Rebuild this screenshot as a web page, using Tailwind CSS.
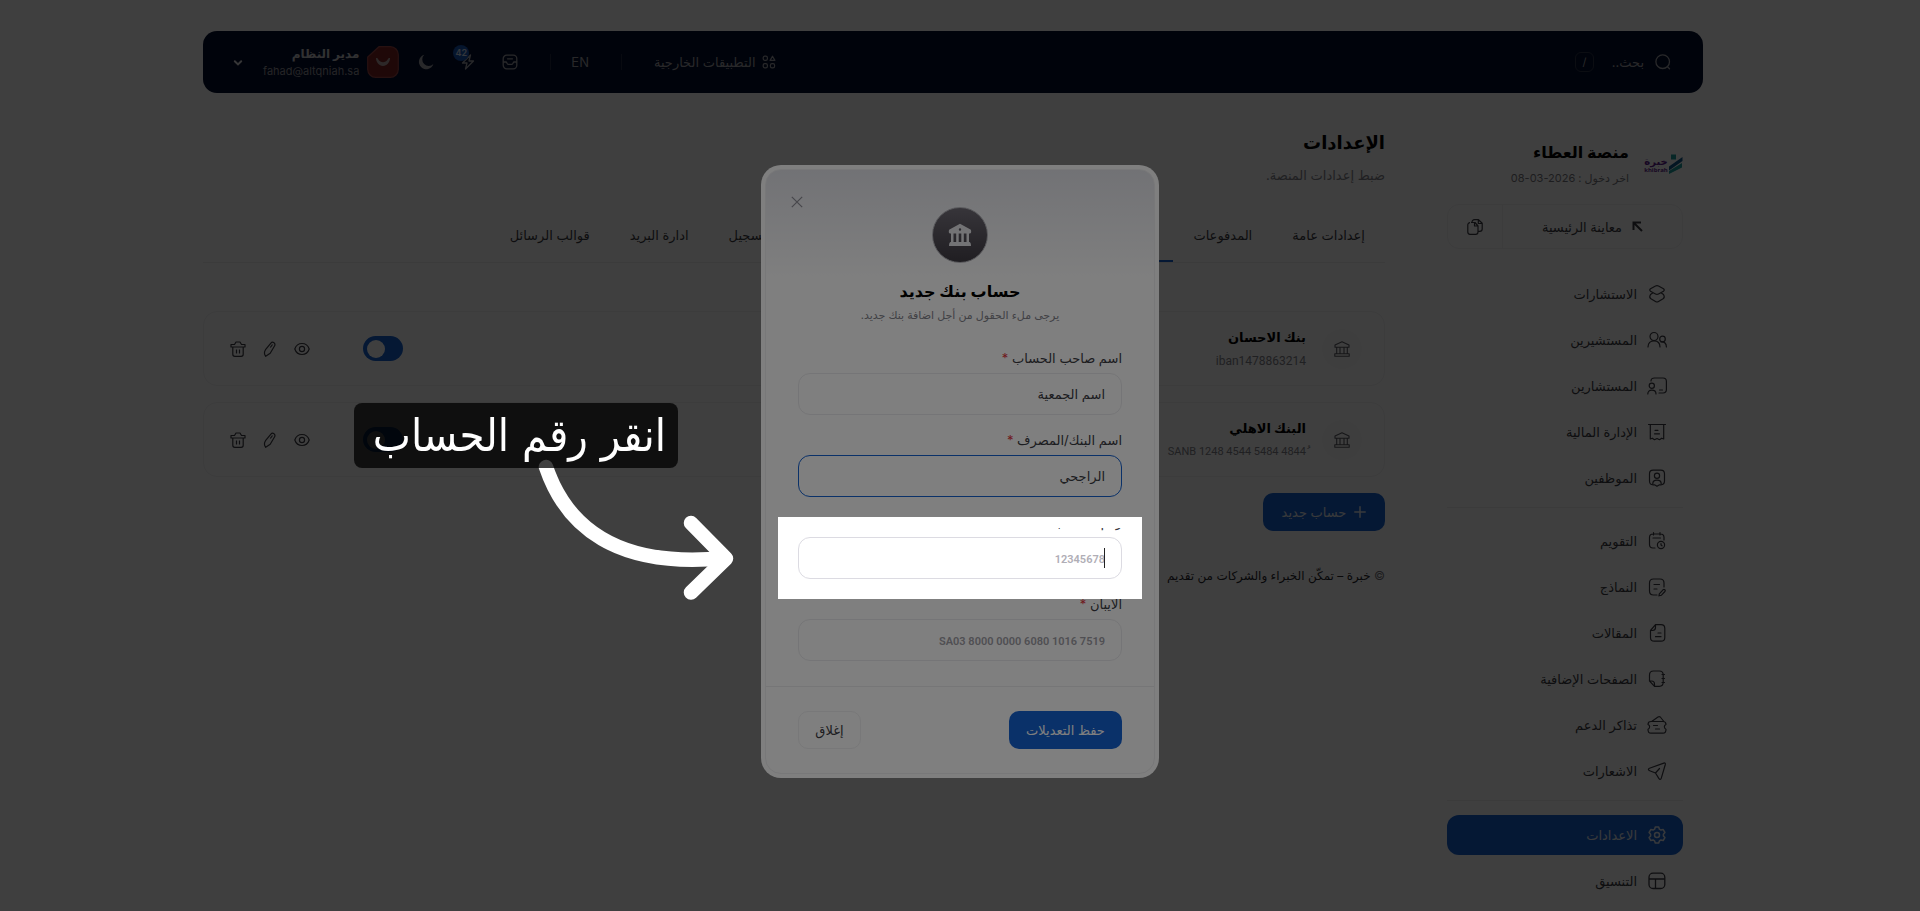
<!DOCTYPE html>
<html lang="ar" dir="rtl">

<head>
  <meta charset="UTF-8">
  <meta name="viewport" content="width=device-width, initial-scale=1.0">
  <title>الإعدادات - منصة العطاء</title>
  <script src="https://cdn.jsdelivr.net/npm/@tailwindcss/browser@4"></script>
</head>

<body class="bg-white h-screen overflow-hidden pr-[14px] pt-[31px] text-[13px] leading-5 text-[#3a3a42] font-[Inter,'DejaVu_Sans',sans-serif]">

  <!-- الشريط العلوي -->
  <header class="max-w-[1500px] h-[62px] mx-auto pr-8 pl-[30px] rounded-[14px] bg-[#020c2c] flex items-center justify-between text-[#a2a3aa]">
    <div class="flex items-center gap-1">
      <label class="flex items-center gap-[11px]">
        <svg class="size-4" viewBox="0 0 16 16" fill="none" stroke="currentColor" stroke-width="1.3"><circle cx="7.7" cy="7.7" r="6.8" /><path d="M12.5 12.8l2 2" stroke-linecap="round" /></svg>
        <input type="search" placeholder="بحث.." aria-label="بحث" class="w-[46px] text-[13px] outline-none placeholder:text-[#a2a3aa]">
      </label>
      <kbd class="w-[19px] h-5 rounded-md border border-[#2c3549] text-[11px] leading-[18px] text-center font-[Inter]">/</kbd>
    </div>

    <div class="flex items-center">
      <a href="#" class="flex items-center gap-[6px]">
        <svg class="size-[14px]" viewBox="0 0 14 14" fill="none" stroke="currentColor" stroke-width="1.2"><path d="M10.5 1.2l2.4 4.2H8.100z" stroke-linejoin="round" /><rect x="1.200" y="1.200" width="4.200" height="4.200" rx="1.600" /><rect x="1.200" y="8.600" width="4.200" height="4.200" rx="1.600" /><rect x="8.400" y="8.600" width="4.200" height="4.200" rx="1.600" /></svg>
        التطبيقات الخارجية
      </a>
      <span class="w-px h-4 mr-8 bg-[#222b42]"></span>
      <button class="mr-8 text-[13px]">EN</button>
      <span class="w-px h-4 mr-5 ml-8 bg-[#222b42]"></span>
      <button aria-label="البريد">
        <svg class="size-4" viewBox="0 0 16 16" fill="none" stroke="currentColor" stroke-width="1.3" stroke-linecap="round"><rect x="1.200" y="1.200" width="13.600" height="13.600" rx="3.500" /><path d="M5.500 4.800h5M1.500 8H4c.8 0 1 2.300 2 2.300h4c1 0 1.200-2.300 2-2.300h2.500" /></svg>
      </button>
      <button aria-label="الإشعارات" class="relative mr-[26px]">
        <svg class="size-4" viewBox="0 0 16 16" fill="none" stroke="currentColor" stroke-width="1.3" stroke-linejoin="round"><path d="M10.500 1L2.500 9H7l-1.500 6L13.500 7H9z" /></svg>
        <span class="absolute -top-[9px] -left-[7px] w-4 h-4 rounded-full bg-[#1455b5] text-white/80 text-[9px] leading-4 font-semibold text-center">42</span>
      </button>
      <button aria-label="الوضع الليلي" class="mr-[26px]">
        <svg class="size-4" viewBox="0 0 16 16" fill="currentColor"><path d="M6.200.8A7.400 7.400 0 1 0 15.400 10.100 6.300 6.300 0 0 1 6.200.8z" /></svg>
      </button>
      <svg class="size-8 mr-[19px]" viewBox="0 0 32 32"><path d="M12 .7h11a8 8 0 0 1 8.300 8.300v14a8 8 0 0 1-8.300 8.300H9A8 8 0 0 1 .7 23V11z" fill="#7c2222" stroke="#9c4545" stroke-width="1.200" /><path d="M9 12c1.500 0 1.500 0 2.500 1.700a5.200 5.200 0 0 0 9 0C21.500 12 21.500 12 23 12c0 4-3 8-7 8s-7-4-7-8z" fill="#b5a3a3" /></svg>
      <div class="mr-2">
        <p class="text-xs leading-[18px] font-bold text-[#c6c6cb]">مدير النظام</p>
        <p class="text-[11px] leading-4 text-[#94959c]" dir="ltr">fahad@altqniah.sa</p>
      </div>
      <svg class="w-[10px] h-[10px] mr-5 mt-px" viewBox="0 0 10 10" fill="none" stroke="#d8d8dc" stroke-width="2" stroke-linecap="round"><path d="M1.800 3.200L5 6.400l3.200-3.200" /></svg>
    </div>
  </header>

  <div class="max-w-[1500px] mx-auto pr-5 flex gap-[62px]">
    <!-- القائمة الجانبية -->
    <aside class="w-[236px] shrink-0 pt-[47px]">
      <div class="flex items-center gap-4">
        <svg class="w-[38px] h-[22px] overflow-visible" viewBox="0 0 38 22">
          <text x="11" y="12" text-anchor="middle" font-size="10" font-weight="bold" fill="#5d1a8c" class="font-['DejaVu_Sans']">خبرة</text>
          <text x="11" y="19" text-anchor="middle" font-size="6" font-weight="bold" fill="#5d1a8c" class="font-['Open_Sans']">khibrah</text>
          <path d="M26 1.500h5v5h-5z" fill="#1e9c9c" /><path d="M24 13.500L37.500 4v4L24 17.500z" fill="#12588c" /><path d="M24 18L37 10v4.500L24 21z" fill="#1e9c9c" />
        </svg>
        <div>
          <h2 class="text-base leading-6 font-bold text-black">منصة العطاء</h2>
          <p class="mt-1 text-[11px] text-[#77777f]">اخر دخول : <span dir="ltr">08-03-2026</span></p>
        </div>
      </div>
      <div class="mt-4 h-[45px] flex rounded-xl border border-[#f0f0f2]">
        <a href="#" class="flex-1 flex items-center justify-center gap-[10px]">
          <svg class="size-[11px]" viewBox="0 0 11 11" fill="none" stroke="currentColor" stroke-width="2"><path d="M1.500 9V1.500H9M1.500 1.500l8.500 8.500" /></svg>
          معاينة الرئيسية
        </a>
        <button aria-label="نسخ" class="w-[55px] border-r border-[#f0f0f2] flex items-center justify-center">
          <svg class="size-4" viewBox="0 0 16 16" fill="none" stroke="currentColor" stroke-width="1.200" stroke-linejoin="round"><path d="M4 3.500h4L11 7v6a2.300 2.300 0 0 1-2.300 2.300H3A2.300 2.300 0 0 1 .8 13V6A2.300 2.300 0 0 1 3 3.600M7.500 3.700V7H11M5 3.300C5 1.500 6 .7 7.500.7h4L15.200 4.300V10c0 1.500-1 2.400-2.500 2.400H11.300M11.300.8V4.500H15" /></svg>
        </button>
      </div>

      <nav class="mt-[25px]">
        <ul class="flex flex-col gap-[6px] pb-[9px]">
          <li><a href="#" class="h-10 px-[16px] flex items-center gap-[10px]">
            <svg class="size-5" viewBox="0 0 20 20" fill="none" stroke="currentColor" stroke-width="1.200" stroke-linejoin="round"><path d="M8.500 2Q10 1.200 11.500 2L16.500 4.800Q18 6 16.500 7.200L11.500 10Q10 10.800 8.500 10L3.500 7.200Q2 6 3.500 4.800zM6 8.700L3.500 10.500Q2 13 3.500 14.500L8.500 17.500Q10 18.500 11.500 17.500L16.500 14.500Q18 13 16.500 10.500L14 8.700" /></svg>
            الاستشارات</a></li>
          <li><a href="#" class="h-10 px-[16px] flex items-center gap-[10px]">
            <svg class="size-5" viewBox="0 0 20 20" fill="none" stroke="currentColor" stroke-width="1.200" stroke-linecap="round"><circle cx="7" cy="6.500" r="4" /><path d="M1 17c0-4 2.500-6.200 6-6.200s6 2.200 6 6.200" /><circle cx="15.500" cy="9" r="2.800" /><path d="M14 12c3.500-.5 5.400 1.500 5.400 5" /></svg>
            المستشيرين</a></li>
          <li><a href="#" class="h-10 px-[16px] flex items-center gap-[10px]">
            <svg class="size-5" viewBox="0 0 20 20" fill="none" stroke="currentColor" stroke-width="1.200" stroke-linecap="round"><path d="M4 5c0-2 1.500-3 3.500-3H16c2.200 0 3.400 1.200 3.400 3.400v8.200c0 2.200-1.200 3.400-3.400 3.400h-4M12.500 14h3" /><circle cx="4.800" cy="9.800" r="2.600" /><path d="M.8 18c0-2.600 1.600-3.800 4-3.800S9 15.400 9 18" /></svg>
            المستشارين</a></li>
          <li><a href="#" class="h-10 px-[16px] flex items-center gap-[10px]">
            <svg class="size-5" viewBox="0 0 20 20" fill="none" stroke="currentColor" stroke-width="1.200" stroke-linecap="round" stroke-linejoin="round"><path d="M1.500 2.500h17M3.300 2.500V17l2-.8 2.200 1.500 2.500-1.200 2.500 1.200 2.200-1.500 2 .8V2.500M8 8.300h3M7.500 11.800h5" /></svg>
            الإدارة المالية</a></li>
          <li><a href="#" class="h-10 px-[16px] flex items-center gap-[10px]">
            <svg class="size-5" viewBox="0 0 20 20" fill="none" stroke="currentColor" stroke-width="1.200" stroke-linecap="round" stroke-linejoin="round"><path d="M7.500 16.800H6.200c-2.500 0-3.700-1.200-3.700-3.700V5.800c0-2.500 1.200-3.700 3.700-3.700h7.600c2.500 0 3.700 1.200 3.700 3.700v7.300c0 2.500-1.200 3.700-3.700 3.700h-1.300L10 18.300z" /><circle cx="10" cy="7.700" r="2.600" /><path d="M5.800 15.800c0-2.400 1.700-3.600 4.200-3.600s4.200 1.200 4.200 3.600" /></svg>
            الموظفين</a></li>
        </ul>
        <ul class="flex flex-col gap-[6px] pt-[13px] pb-[9px] border-t border-[#ececee]">
          <li><a href="#" class="h-10 px-[16px] flex items-center gap-[10px]">
            <svg class="size-5" viewBox="0 0 20 20" fill="none" stroke="currentColor" stroke-width="1.200" stroke-linecap="round"><path d="M8 17H6c-2.400 0-3.500-1.100-3.500-3.500v-7C2.500 4.100 3.600 3 6 3h7.500C16 3 17 4.100 17 6.500V9M6.500 1.500V4M13 1.500V4M6 7h7.500" /><circle cx="14" cy="14" r="3.600" /><path d="M14 12.500V14l1 .8" /></svg>
            التقويم</a></li>
          <li><a href="#" class="h-10 px-[16px] flex items-center gap-[10px]">
            <svg class="size-5" viewBox="0 0 20 20" fill="none" stroke="currentColor" stroke-width="1.200" stroke-linecap="round"><path d="M10 18H6.500c-2.700 0-4-1.300-4-4V6c0-2.700 1.300-4 4-4H13c2.700 0 4 1.300 4 4v4M7 7.500h5.500M7 12h3" /><path d="M12.300 16.800l3.700-4c1.300-1.200 3 .4 1.900 1.700l-3.600 3.800-2.300.5z" /></svg>
            النماذج</a></li>
          <li><a href="#" class="h-10 px-[16px] flex items-center gap-[10px]">
            <svg class="size-5" viewBox="0 0 20 20" fill="none" stroke="currentColor" stroke-width="1.200" stroke-linecap="round"><path d="M3.500 7.500L8.500 1.600H14c2.500 0 3.800 1.300 3.800 3.800v9c0 2.500-1.300 3.800-3.800 3.800H7.300c-2.500 0-3.800-1.300-3.800-3.800zM8.500 1.800V4.500c0 2-1 3-3 3H3.700M11 10h3M8.500 13.700H14" /></svg>
            المقالات</a></li>
          <li><a href="#" class="h-10 px-[16px] flex items-center gap-[10px]">
            <svg class="size-5" viewBox="0 0 20 20" fill="none" stroke="currentColor" stroke-width="1.200" stroke-linecap="round"><path d="M7.500 17.300L2.500 12V6c0-2.700 1.300-4 4-4h5.800c2.600 0 3.900 1.300 3.900 4v7.300c0 2.700-1.300 4-3.900 4zM7.500 17v-2c0-2-1-3-3-3h-2M15 5.500h2.500M15 9.500h2.500M15 13.500h2.500" /></svg>
            الصفحات الإضافية</a></li>
          <li><a href="#" class="h-10 px-[16px] flex items-center gap-[10px]">
            <svg class="size-5" viewBox="0 0 20 20" fill="none" stroke="currentColor" stroke-width="1.200" stroke-linecap="round" stroke-linejoin="round"><path d="M4 6.500h12c2 0 3 1 3 3-2.200.7-2.200 4 0 4.700 0 3-1 4-3 4H4c-2 0-3-1-3-4 2.200-.7 2.200-4 0-4.700 0-2 1-3 3-3zM5 6.300L11 2c1-.7 1.500-.7 2.300 0L16.500 6M6.500 10.500h4M8.500 14h4" /></svg>
            تذاكر الدعم</a></li>
          <li><a href="#" class="h-10 px-[16px] flex items-center gap-[10px]">
            <svg class="size-5" viewBox="0 0 20 20" fill="none" stroke="currentColor" stroke-width="1.200" stroke-linecap="round" stroke-linejoin="round"><path d="M2.500 7.300l14.300-5.200c1.200-.4 1.800.2 1.500 1.400l-4 13.600c-.5 1.700-1.600 1.700-2.500.3L8.500 12 2.700 9.700C1 9 1 7.900 2.500 7.300zM8.500 12l4-4.500" /></svg>
            الاشعارات</a></li>
        </ul>
        <ul class="flex flex-col gap-[6px] pt-[14px] border-t border-[#ececee]">
          <li><a href="#" class="h-10 px-[16px] flex items-center gap-[10px] rounded-xl bg-[#1562d2] text-[#e2e7ef]">
            <svg class="size-5" viewBox="0 0 20 20" fill="none" stroke="currentColor" stroke-width="1.500" stroke-linejoin="round"><path d="M8.300 2h3.400l.7 2.200 1.500.9 2.300-.5 1.700 2.900L16.400 9.200v1.700l1.500 1.700-1.700 2.900-2.300-.5-1.500.9-.7 2.200H8.300l-.7-2.200-1.500-.9-2.300.5-1.700-2.900 1.500-1.700V9.200L2.100 7.500l1.700-2.900 2.300.5 1.500-.9z" /><circle cx="10" cy="10" r="2.500" /></svg>
            الاعدادات</a></li>
          <li><a href="#" class="h-10 px-[16px] flex items-center gap-[10px]">
            <svg class="size-5" viewBox="0 0 20 20" fill="none" stroke="currentColor" stroke-width="1.300"><rect x="2" y="2.200" width="15.800" height="15.300" rx="4" /><path d="M2 8h15.800M8.500 8v9.500" /></svg>
            التنسيق</a></li>
        </ul>
      </nav>
    </aside>

    <!-- محتوى الإعدادات -->
    <main class="flex-1 min-w-0 pt-9">
      <h1 class="text-lg leading-7 font-bold text-black">الإعدادات</h1>
      <p class="mt-2 text-[13px] leading-5 text-[#82828a]">ضبط إعدادات المنصة.</p>

      <nav class="mt-[23px] flex border-b border-[#ececee] whitespace-nowrap *:h-[54px] *:px-5 *:flex *:items-center">
        <a href="#">إعدادات عامة</a>
        <a href="#">المدفوعات</a>
        <a href="#" class="-mb-px border-b-2 border-[#1562d2]">الحسابات البنكية</a>
        <a href="#" class="w-[204px]">وسائل التواصل</a>
        <a href="#">إعدادات التسجيل</a>
        <a href="#">ادارة البريد</a>
        <a href="#">قوالب الرسائل</a>
      </nav>

      <ul class="mt-12 flex flex-col gap-4">
        <li class="h-[75px] pr-[22px] pl-[26px] rounded-[14px] border border-[#f0f0f2] flex items-center">
          <span class="size-10 rounded-full bg-[#fafafa] text-[#5a5a62] flex items-center justify-center">
            <svg class="size-4" viewBox="0 0 16 16" fill="none" stroke="currentColor" stroke-width="1.100" stroke-linejoin="round"><path d="M8 .8L15 4v2.200H1V4zM.8 15.200v-2.400h14.400v2.400zM2.700 6.200v6.600M6 6.200v6.600M10 6.200v6.600M13.300 6.200v6.600" /></svg>
          </span>
          <div class="mr-4">
            <p class="mb-1 text-[13px] leading-5 font-bold text-black">بنك الاحسان</p>
            <p class="text-xs leading-5 text-[#82828a] font-[Roboto,'DejaVu_Sans',sans-serif]">iban1478863214</p>
          </div>
          <input type="checkbox" checked aria-label="تفعيل بنك الاحسان" class="mr-auto appearance-none w-10 h-[25px] rounded-full bg-[#1562d2] p-1 flex items-center justify-end before:content-[''] before:size-[18px] before:rounded-full before:bg-white">
          <div class="mr-[53px] flex gap-4">
            <button aria-label="عرض"><svg class="size-4" viewBox="0 0 16 16" fill="none" stroke="currentColor" stroke-width="1.200"><path d="M.8 8C2 4.500 4.500 2.500 8 2.500S14 4.500 15.200 8C14 11.500 11.500 13.500 8 13.500S2 11.500.8 8z" /><circle cx="8" cy="8" r="2.600" /></svg></button>
            <button aria-label="تعديل"><svg class="size-4" viewBox="0 0 16 16" fill="none" stroke="currentColor" stroke-width="1.200" stroke-linejoin="round"><path d="M3.500 8.700L8.700 2.300c2.100-2.400 5.300 0 3.800 2.700l-4.300 7.300-4.500 3c-1.200-1.500-1.500-4.500-.2-6.600zM8.300 6.500l2.200-3" /></svg></button>
            <button aria-label="حذف"><svg class="size-4" viewBox="0 0 16 16" fill="none" stroke="currentColor" stroke-width="1.200" stroke-linejoin="round"><path d="M2.800 6v7.300c0 1.300.7 2 2 2h6.400c1.300 0 2-.7 2-2V6M1 3.500h3.500L6 1h4l1.500 2.500H15V6H1zM6.500 8.500v4M9.500 8.500v4" /></svg></button>
          </div>
        </li>
        <li class="h-[75px] pr-[22px] pl-[26px] rounded-[14px] border border-[#f0f0f2] flex items-center">
          <span class="size-10 rounded-full bg-[#fafafa] text-[#5a5a62] flex items-center justify-center">
            <svg class="size-4" viewBox="0 0 16 16" fill="none" stroke="currentColor" stroke-width="1.100" stroke-linejoin="round"><path d="M8 .8L15 4v2.200H1V4zM.8 15.200v-2.400h14.400v2.400zM2.700 6.200v6.600M6 6.200v6.600M10 6.200v6.600M13.300 6.200v6.600" /></svg>
          </span>
          <div class="mr-4">
            <p class="mb-1 text-[13px] leading-5 font-bold text-black">البنك الاهلي</p>
            <p class="text-[11px] leading-5 text-[#82828a] font-[Roboto,'DejaVu_Sans',sans-serif]">&#1615;SANB 1248 4544 5484 4844</p>
          </div>
          <input type="checkbox" checked aria-label="تفعيل البنك الاهلي" class="mr-auto appearance-none w-10 h-[25px] rounded-full bg-[#1562d2] p-1 flex items-center justify-end before:content-[''] before:size-[18px] before:rounded-full before:bg-white">
          <div class="mr-[53px] flex gap-4">
            <button aria-label="عرض"><svg class="size-4" viewBox="0 0 16 16" fill="none" stroke="currentColor" stroke-width="1.200"><path d="M.8 8C2 4.500 4.500 2.500 8 2.500S14 4.500 15.200 8C14 11.500 11.500 13.500 8 13.500S2 11.500.8 8z" /><circle cx="8" cy="8" r="2.600" /></svg></button>
            <button aria-label="تعديل"><svg class="size-4" viewBox="0 0 16 16" fill="none" stroke="currentColor" stroke-width="1.200" stroke-linejoin="round"><path d="M3.500 8.700L8.700 2.300c2.100-2.400 5.300 0 3.800 2.700l-4.300 7.300-4.500 3c-1.200-1.500-1.500-4.500-.2-6.600zM8.300 6.500l2.200-3" /></svg></button>
            <button aria-label="حذف"><svg class="size-4" viewBox="0 0 16 16" fill="none" stroke="currentColor" stroke-width="1.200" stroke-linejoin="round"><path d="M2.800 6v7.300c0 1.300.7 2 2 2h6.400c1.300 0 2-.7 2-2V6M1 3.500h3.500L6 1h4l1.500 2.500H15V6H1zM6.500 8.500v4M9.500 8.500v4" /></svg></button>
          </div>
        </li>
      </ul>

      <button class="mt-4 h-[38px] w-[122px] rounded-[10px] bg-[#1562d2] text-[#e2e7ef] flex items-center justify-center gap-2">
        <svg class="size-3" viewBox="0 0 12 12" stroke="currentColor" stroke-width="1.500" stroke-linecap="round"><path d="M6 .8v10.400M.8 6h10.400" /></svg>
        حساب جديد
      </button>

      <footer class="mt-[35px] text-xs leading-5 text-[#26262c]"><span class="text-[#77777f]">©</span> خبرة – تمكّن الخبراء والشركات من تقديم</footer>
    </main>
  </div>

  <!-- نافذة إضافة حساب بنكي -->
  <div class="fixed inset-0 bg-black/50 flex items-start justify-center pt-[165px]">
    <div role="dialog" aria-labelledby="modalTitle" class="w-[398px] p-1 rounded-[20px] bg-white">
      <form class="relative rounded-2xl border border-[#f0f0f2] bg-linear-to-b from-[#e4e5eb] to-white to-[110px]">
        <button type="button" aria-label="إغلاق النافذة" class="absolute top-[26px] left-[25px]">
          <svg class="size-3" viewBox="0 0 12 12" stroke="#8d8d96" stroke-width="1.200"><path d="M.8.8l10.400 10.400M11.200.8L.8 11.200" /></svg>
        </button>
        <div class="px-8 pt-[37px] pb-[25px]">
          <div class="size-14 mx-auto rounded-full border border-[#b4b4ba] bg-linear-to-b from-[#6e6a74] to-[#403c44] flex items-center justify-center">
            <svg class="size-6" viewBox="0 0 24 24" fill="#e6e6ea"><path fill-rule="evenodd" d="M12 .8L22.500 6.500c1 .6 1 4-.5 4H2c-1.500 0-1.500-3.400-.5-4zM12 5.300a1.200 1.200 0 1 0 0 2.400 1.200 1.200 0 0 0 0-2.400z" /><path d="M3 10h2.500v9H3zM8.200 10h2.500v9H8.200zM13.300 10h2.500v9h-2.500zM18.500 10H21v9h-2.500zM2.500 19h19c1 .5 1.500 1.500 1.500 4H1c0-2.500.5-3.500 1.500-4z" /></svg>
          </div>
          <h2 id="modalTitle" class="mt-4 text-base leading-6 font-bold text-black text-center">حساب بنك جديد</h2>
          <p class="mt-[2px] text-[11px] leading-5 text-[#82828a] text-center">يرجى ملء الحقول من أجل اضافة بنك جديد.</p>

          <div class="mt-[23px] flex flex-col gap-[15px]">
            <div>
              <label for="owner" class="block mb-[5px]">اسم صاحب الحساب <span class="text-[#e0343c]">*</span></label>
              <input id="owner" type="text" value="اسم الجمعية" class="block w-full h-[42px] px-4 rounded-xl border border-[#ebebee] outline-none">
            </div>
            <div>
              <label for="bank" class="block mb-[5px]">اسم البنك/المصرف <span class="text-[#e0343c]">*</span></label>
              <input id="bank" type="text" value="الراجحي" class="block w-full h-[42px] px-4 rounded-xl border border-[#1562d2] outline-none">
            </div>
            <div>
              <label for="account" class="block mb-[5px]">رقم الحساب <span class="text-[#e0343c]">*</span></label>
              <div class="relative">
                <input id="account" type="text" placeholder="12345678" class="block w-full h-[42px] px-4 rounded-xl border border-[#dcdbe2] outline-none placeholder:text-[#b0aeb6] placeholder:text-[11px] placeholder:font-semibold placeholder:font-[Roboto]">
                <span class="absolute top-[11px] right-[17px] w-px h-5 bg-[#222]"></span>

                <!-- تظليل الحقل المطلوب -->
                <div class="absolute z-10 -inset-5 shadow-[0_0_0_2000px_rgba(0,0,0,0.5)] pointer-events-none">
                  <div class="h-[11px] bg-white"></div>
                  <!-- الشرح والسهم -->
                  <div class="absolute -top-[114px] right-full mr-10 w-[384px] h-[204px]">
                    <svg class="absolute inset-0" viewBox="0 0 384 204" fill="none" stroke="#fff" stroke-width="14.500" stroke-linecap="round" stroke-linejoin="round"><path d="M192 64C212 123 262 166 371 155" /><path d="M337 120l35 35.500-35 34" /></svg>
                    <p class="relative w-[324px] mr-[60px] h-[65px] pr-3 rounded-lg bg-black/75 text-white text-[45px] leading-[65px] whitespace-nowrap font-['DejaVu_Sans_Condensed','DejaVu_Sans',sans-serif]">انقر رقم الحساب</p>
                  </div>
                </div>
              </div>
            </div>
            <div>
              <label for="iban" class="block mb-[5px]">الايبان <span class="text-[#e0343c]">*</span></label>
              <input id="iban" type="text" dir="ltr" placeholder="SA03 8000 0000 6080 1016 7519" class="block w-full h-[42px] px-4 text-right rounded-xl border border-[#ebebee] outline-none placeholder:text-[#a09ea6] placeholder:text-[11px] placeholder:font-semibold placeholder:font-[Roboto]">
            </div>
          </div>
        </div>
        <div class="px-8 py-6 border-t border-[#ececee] flex justify-between">
          <button type="submit" class="w-[113px] h-[38px] rounded-[10px] bg-[#1562d2] text-white">حفظ التعديلات</button>
          <button type="button" class="w-[63px] h-[38px] rounded-[10px] border border-[#f0f0f2]">إغلاق</button>
        </div>
      </form>
    </div>
  </div>
</body>

</html>
